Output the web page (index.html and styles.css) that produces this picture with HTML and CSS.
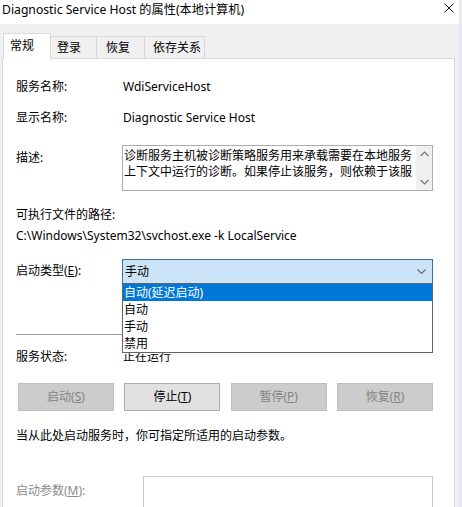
FILE: index.html
```html
<!DOCTYPE html>
<html>
<head>
<meta charset="utf-8">
<link rel="stylesheet" href="styles.css">
</head>
<body>
<div class="window">
  <div class="titlebar">
    <span class="title">Diagnostic Service Host 的属性(本地计算机)</span>
    <svg class="close" width="10" height="10" viewBox="0 0 10 10"><path d="M0.5 0.5L9.5 9.5M9.5 0.5L0.5 9.5" stroke="#111" stroke-width="1"/></svg>
  </div>
  <div class="client">
    <div class="tabs">
      <div class="tab active">常规</div>
      <div class="tab t2">登录</div>
      <div class="tab t3">恢复</div>
      <div class="tab t4">依存关系</div>
    </div>
    <div class="panel">
      <div class="row r1"><span class="label">服务名称:</span><span class="value">WdiServiceHost</span></div>
      <div class="row r2"><span class="label">显示名称:</span><span class="value">Diagnostic Service Host</span></div>
      <div class="row r-desc">
        <span class="label pad5">描述:</span>
        <div class="desc">
          <div class="desc-text">诊断服务主机被诊断策略服务用来承载需要在本地服务<br>上下文中运行的诊断。如果停止该服务，则依赖于该服</div>
          <div class="scroll">
            <svg width="9" height="6" viewBox="0 0 9 6"><path d="M0.5 5L4.5 1L8.5 5" fill="none" stroke="#7a7a7a" stroke-width="1.2"/></svg>
            <svg width="9" height="6" viewBox="0 0 9 6"><path d="M0.5 1L4.5 5L8.5 1" fill="none" stroke="#7a7a7a" stroke-width="1.2"/></svg>
          </div>
        </div>
      </div>
      <div class="path-label">可执行文件的路径:</div>
      <div class="path">C:\Windows\System32\svchost.exe -k LocalService</div>
      <div class="row r-start">
        <span class="label pad4 narrow">启动类型(<u>E</u>):</span>
        <div class="combo">
          <span class="combo-text">手动</span>
          <svg class="chev" width="9" height="5" viewBox="0 0 9 5"><path d="M0.5 0.5L4.5 4.5L8.5 0.5" fill="none" stroke="#6a6a6a" stroke-width="1.1"/></svg>
          <ul class="dropdown">
            <li class="sel">自动(延迟启动)</li>
            <li>自动</li>
            <li>手动</li>
            <li>禁用</li>
          </ul>
        </div>
      </div>
      <div class="sep"></div>
      <div class="row r-status"><span class="label">服务状态:</span><span class="value">正在运行</span></div>
      <div class="buttons">
        <div class="btn disabled">启动(<u>S</u>)</div>
        <div class="btn">停止(<u>T</u>)</div>
        <div class="btn disabled">暂停(<u>P</u>)</div>
        <div class="btn disabled">恢复(<u>R</u>)</div>
      </div>
      <div class="hint">当从此处启动服务时，你可指定所适用的启动参数。</div>
      <div class="row r-param">
        <span class="label pad7 wide grey">启动参数(<u>M</u>):</span>
        <div class="param-input"></div>
      </div>
    </div>
  </div>
</div>
</body>
</html>
```

FILE: styles.css
```css
* { box-sizing: border-box; }
html, body { margin: 0; padding: 0; }
body {
  width: 462px;
  height: 507px;
  overflow: hidden;
  background: #f0f0f0;
  font-family: "Noto Sans", "Noto Sans CJK SC", sans-serif;
  font-size: 12px;
  line-height: 16px;
  color: #000;
}
.window {
  width: 462px;
  height: 507px;
  border-right: 3px solid #e4eaf0;
}
.titlebar {
  height: 24px;
  background: #fff;
  position: relative;
  display: flex;
  align-items: center;
  padding-left: 2px;
}
.title {
  font-size: 12.2px;
  line-height: 16px;
  margin-top: -4px;
  color: #000;
}
.close {
  position: absolute;
  left: 444px;
  top: 3px;
}
.client {
  background: #f0f0f0;
}
.tabs {
  display: flex;
  align-items: flex-end;
  height: 35px;
  padding-left: 3px;
}
.tab {
  height: 22px;
  margin-bottom: 1px;
  border: 1px solid #d9d9d9;
  border-bottom: none;
  background: #f0f0f0;
  padding-left: 6px;
  padding-top: 3px;
  margin-left: -1px;
}
.tab.active {
  position: relative;
  z-index: 2;
  height: 26px;
  margin-bottom: 0;
  margin-left: 0;
  width: 48px;
  background: #fff;
  padding-top: 4px;
}
.t2 { width: 47px; }
.t3 { width: 49px; padding-left: 9px; }
.t4 { width: 61px; padding-left: 8px; }
.panel {
  position: relative;
  z-index: 1;
  margin-top: -1px;
  margin-left: 2px;
  width: 453px;
  height: 460px;
  background: #fff;
  border: 1px solid #d9d9d9;
  padding: 20px 21px 0 13px;
}
.row {
  display: flex;
  align-items: flex-start;
}
.label {
  width: 107px;
  flex: none;
}
.label.narrow { width: 106px; }
.label.wide { width: 127px; }
.label.grey { color: #8a8a8a; }
.pad4 { padding-top: 4px; }
.pad5 { padding-top: 5px; }
.pad7 { padding-top: 7px; }
.r1 { height: 16px; }
.r2 { height: 16px; margin-top: 15px; }
.r-desc { margin-top: 19px; height: 46px; }
.desc {
  width: 311px;
  height: 46px;
  margin-left: -1px;
  border: 1px solid #abadb3;
  display: flex;
}
.desc-text {
  flex: 1;
  padding: 2px 0 0 1px;
  white-space: nowrap;
  overflow: hidden;
  line-height: 16px;
}
.scroll {
  width: 16px;
  background: #f0f0f0;
  display: flex;
  flex-direction: column;
  justify-content: space-between;
  align-items: center;
  padding: 5px 0 5px;
}
.scroll svg { display: block; }
.path-label { margin-top: 16px; height: 16px; }
.path { margin-top: 5px; height: 16px; }
.r-start { margin-top: 15px; height: 25px; }
.combo {
  position: relative;
  width: 311px;
  height: 25px;
  background: #cce4f7;
  border: 1px solid #3d6e99;
  display: flex;
  align-items: center;
  padding-left: 2px;
}
.combo-text { flex: 1; }
.chev { margin-right: 6px; }
.dropdown {
  position: absolute;
  list-style: none;
  margin: 0;
  padding: 0;
  left: -1px;
  top: 23px;
  width: 311px;
  height: 70px;
  background: #fff;
  border: 1px solid #646464;
  z-index: 5;
}
.dropdown li {
  height: 17px;
  line-height: 17px;
  padding-left: 1px;
}
.dropdown li.sel {
  background: #0078d7;
  color: #fff;
}
.sep {
  margin-top: 50px;
  height: 1px;
  background: #a0a0a0;
}
.r-status { margin-top: 14px; height: 16px; }
.buttons {
  margin-top: 18px;
  margin-left: 2px;
  display: flex;
  justify-content: space-between;
}
.btn {
  width: 96px;
  height: 28px;
  border: 1px solid #adadad;
  background: #e1e1e1;
  display: flex;
  align-items: center;
  justify-content: center;
}
.btn.disabled {
  background: #cccccc;
  border-color: #bfbfbf;
  color: #838383;
}
.hint { margin-top: 17px; height: 16px; }
.r-param { margin-top: 32px; }
.param-input {
  width: 290px;
  height: 34px;
  border: 1px solid #cccccc;
  background: #fff;
}
u { text-decoration: underline; text-underline-offset: 1px; }
```
